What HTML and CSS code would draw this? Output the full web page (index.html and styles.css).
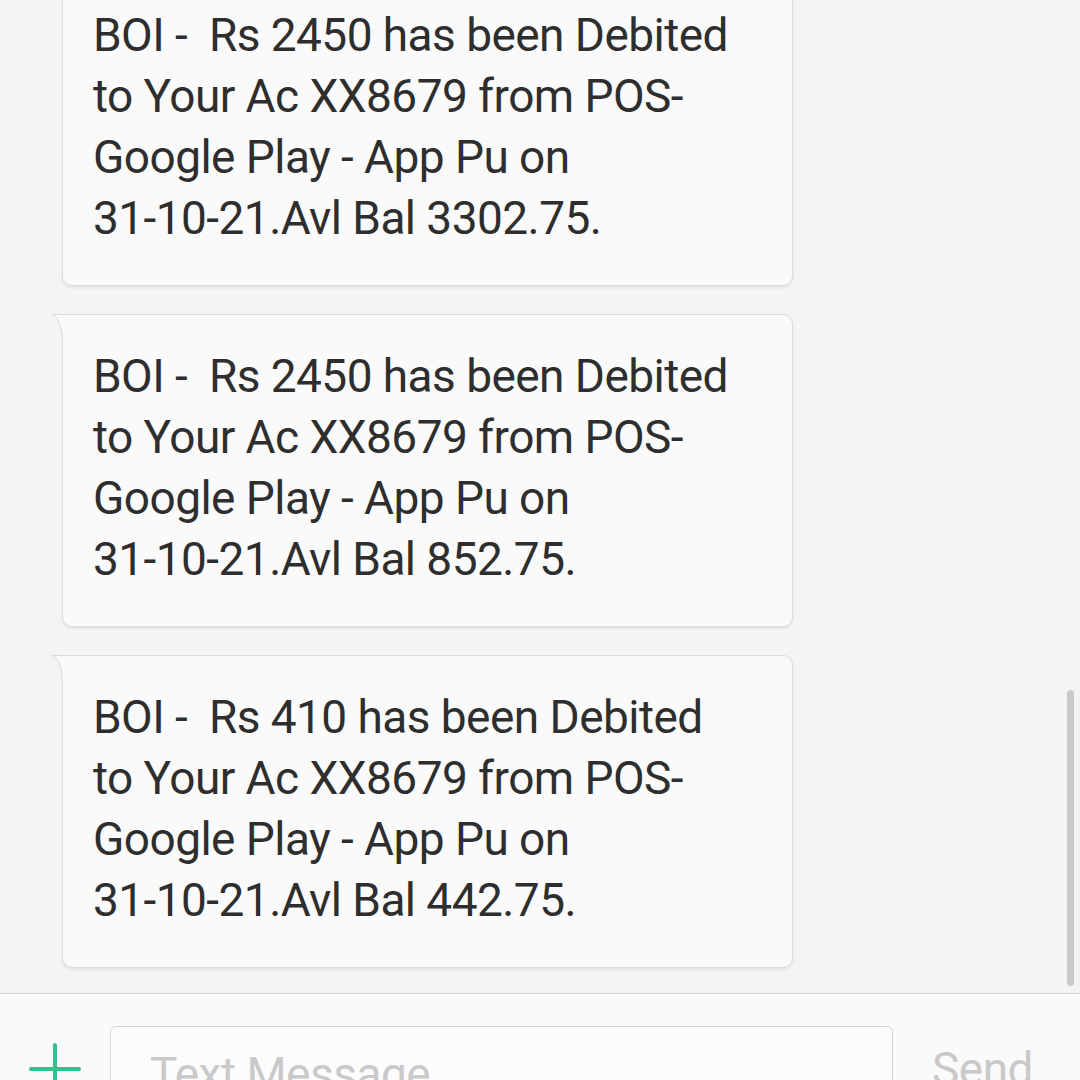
FILE: index.html
```html
<!DOCTYPE html>
<html>
<head>
<meta charset="utf-8">
<link rel="stylesheet" href="styles.css">
</head>
<body>
<div class="screen">
  <div class="thread">
    <div class="list">
      <div class="bubble">
        <svg class="tail" width="12" height="26" viewBox="0 0 12 26"><path d="M1,0 H12 V26 H11.5 C10.5,10 7,3 1,0.5 Z" fill="#fafafa"/><path d="M0.5,0.5 H12 M1,0.5 C7,3 10.5,10 11.5,26" fill="none" stroke="#d9d9d9" stroke-width="1"/></svg>
        <p class="msg">BOI -&nbsp; Rs 2450 has been Debited to Your Ac XX8679 from POS-Google Play - App Pu on <span class="nb">31-10-21.Avl</span> Bal 3302.75.</p>
      </div>
      <div class="bubble">
        <svg class="tail" width="12" height="26" viewBox="0 0 12 26"><path d="M1,0 H12 V26 H11.5 C10.5,10 7,3 1,0.5 Z" fill="#fafafa"/><path d="M0.5,0.5 H12 M1,0.5 C7,3 10.5,10 11.5,26" fill="none" stroke="#d9d9d9" stroke-width="1"/></svg>
        <p class="msg">BOI -&nbsp; Rs 2450 has been Debited to Your Ac XX8679 from POS-Google Play - App Pu on <span class="nb">31-10-21.Avl</span> Bal 852.75.</p>
      </div>
      <div class="bubble">
        <svg class="tail" width="12" height="26" viewBox="0 0 12 26"><path d="M1,0 H12 V26 H11.5 C10.5,10 7,3 1,0.5 Z" fill="#fafafa"/><path d="M0.5,0.5 H12 M1,0.5 C7,3 10.5,10 11.5,26" fill="none" stroke="#d9d9d9" stroke-width="1"/></svg>
        <p class="msg">BOI -&nbsp; Rs 410 has been Debited to Your Ac XX8679 from POS-Google Play - App Pu on <span class="nb">31-10-21.Avl</span> Bal 442.75.</p>
      </div>
    </div>
    <div class="scrollbar"></div>
  </div>
  <div class="composer">
    <svg class="plus" width="52" height="52" viewBox="0 0 52 52"><path d="M26,2 V52 M2,26 H50" stroke="#36bf8d" stroke-width="4" stroke-linecap="round" fill="none"/></svg>
    <div class="input"><span class="placeholder">Text Message</span></div>
    <div class="send">Send</div>
  </div>
</div>
</body>
</html>
```
FILE: styles.css
```css
html, body {
  margin: 0;
  padding: 0;
}
body {
  width: 1080px;
  height: 1080px;
  overflow: hidden;
  background: #f4f4f4;
  font-family: Roboto, "Liberation Sans", sans-serif;
}
.screen {
  display: flex;
  flex-direction: column;
  height: 1080px;
}
.thread {
  position: relative;
  height: 993px;
  overflow: hidden;
  flex: none;
}
.list {
  display: flex;
  flex-direction: column;
  gap: 28px;
  margin-top: -27px;
}
.bubble {
  position: relative;
  margin-left: 62px;
  width: 731px;
  box-sizing: border-box;
  height: 313px;
  padding: 31px 58px 0 30px;
  background: #fafafa;
  border: 1px solid #dcdcdc;
  border-radius: 0 10px 10px 10px;
  box-shadow: 0 2px 3px rgba(0, 0, 0, 0.07);
}
.tail {
  position: absolute;
  left: -12px;
  top: -1px;
  display: block;
}
.msg {
  margin: 0;
  font-size: 46px;
  letter-spacing: -0.55px;
  line-height: 61px;
  color: #2e2e2e;
}
.nb {
  white-space: nowrap;
}
.scrollbar {
  position: absolute;
  left: 1067px;
  top: 690px;
  width: 7px;
  height: 296px;
  border-radius: 4px;
  background: #c9c9c9;
}
.composer {
  flex: 1;
  display: flex;
  align-items: flex-start;
  background: #fafafa;
  border-top: 1px solid #d6d6d6;
  overflow: hidden;
}
.plus {
  flex: none;
  margin: 49px 0 0 29px;
}
.input {
  flex: none;
  box-sizing: border-box;
  width: 783px;
  height: 90px;
  margin: 32px 0 0 29px;
  padding-left: 39px;
  border: 1px solid #d6d6d6;
  border-radius: 6px;
  background: #fcfcfc;
}
.placeholder {
  display: block;
  font-size: 46px;
  letter-spacing: -0.5px;
  line-height: 46px;
  color: #c9c9c9;
  padding-top: 24px;
}
.send {
  flex: none;
  margin: 24px 0 0 39px;
  font-size: 46px;
  letter-spacing: -0.5px;
  line-height: 46px;
  padding-top: 28px;
  color: #c9c9c9;
}
```
